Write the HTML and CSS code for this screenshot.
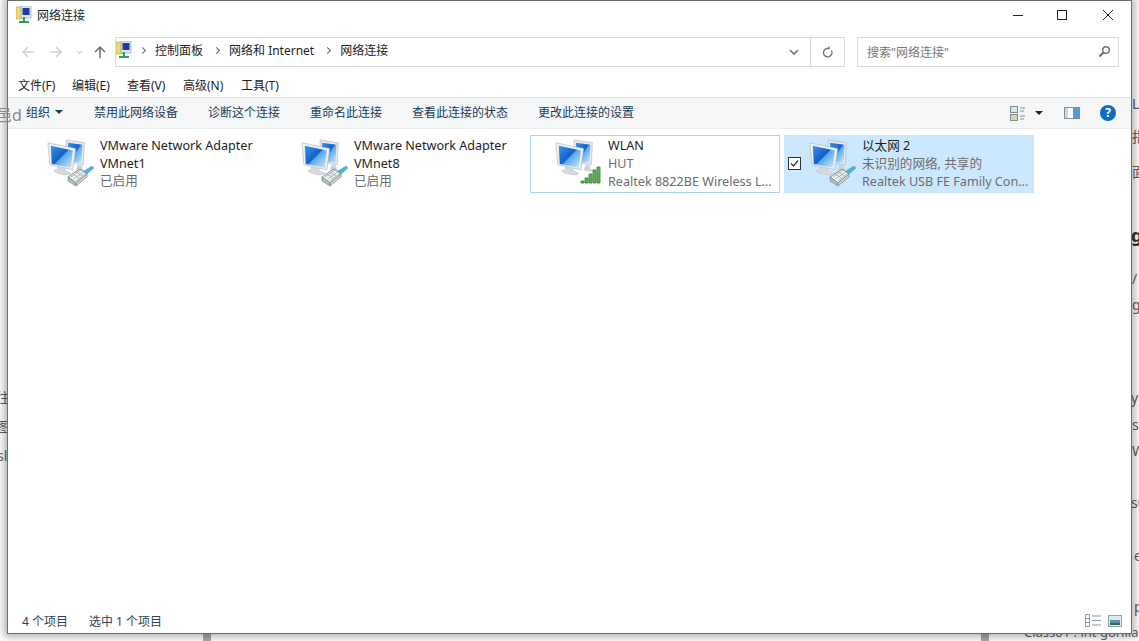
FILE: index.html
```html
<!DOCTYPE html>
<html lang="zh-CN">

<head>
    <meta charset="utf-8" />
    <title>网络连接</title>
    <link rel="stylesheet" href="styles.css">
</head>

<body>
    <svg class="defs" width="0" height="0">
        <defs>
            <linearGradient id="screen" x1="0" y1="0" x2="1" y2="1">
                <stop offset="0" stop-color="#3f95e6" />
                <stop offset="0.48" stop-color="#0f5fcb" />
                <stop offset="0.52" stop-color="#58a8ec" />
                <stop offset="1" stop-color="#d3ecfb" />
            </linearGradient>
            <symbol id="monitors" viewBox="0 0 48 48">
                <path d="M21 2l19 3-1 23-18-3z" fill="#e4e9ed" stroke="#a9b4bd" stroke-width=".6" />
                <path d="M23 5l15 2-1 19-14-2z" fill="url(#screen)" />
                <path d="M33 28l5 1v3l3 2c-2 2-8 1-10-1z" fill="#ccd2d6" />
                <path d="M2 5l29 6-3 22-24-5z" fill="#eef1f3" stroke="#a5b0b9" stroke-width=".6" />
                <path d="M5 8l23 5-2 18-20-4z" fill="url(#screen)" />
                <path d="M12 30l8 2v2l6 3c-3 3-15 1-18-3l4-1z" fill="#d5d9dc" stroke="#b9c0c5" stroke-width=".5" />
            </symbol>
            <symbol id="plug" viewBox="0 0 28 24">
                <path d="M1 14l12-8 7 5-11 9z" fill="#eef1f1" stroke="#7d8a8a" stroke-width=".9" />
                <path d="M4 14l10-7M6.500 16l10-7M9 18l9-7M5 10l7 5M8 8l7 5" stroke="#9aa7a7" stroke-width=".8" fill="none" />
                <path d="M17 8l8-5 2 2-7 6z" fill="#4fb2d4" stroke="#3a8fb0" stroke-width=".4" />
                <path d="M1 14v4l8 5v-3z" fill="#b4bebe" stroke="#7d8a8a" stroke-width=".7" />
                <path d="M9 20v3l11-9v-3z" fill="#cdd5d5" stroke="#7d8a8a" stroke-width=".7" />
            </symbol>
        </defs>
    </svg>

    <!-- bits of the window underneath -->
    <div class="under">
        <span class="bit" style="left:-4px;top:388px">往</span>
        <span class="bit" style="left:-4px;top:417px">图</span>
        <span class="bit" style="left:-3px;top:446px">sl</span>
        <span class="bit" style="left:1132px;top:94px">La</span>
        <span class="bit" style="left:1132px;top:127px">指</span>
        <span class="bit" style="left:1132px;top:162px">面</span>
        <span class="bit strong" style="left:1131px;top:225px">g</span>
        <span class="bit" style="left:1132px;top:269px">/</span>
        <span class="bit" style="left:1132px;top:295px">g</span>
        <span class="bit" style="left:1131px;top:388px">yL</span>
        <span class="bit" style="left:1132px;top:415px">ss</span>
        <span class="bit" style="left:1132px;top:441px">W</span>
        <span class="bit" style="left:1131px;top:493px">s0</span>
        <span class="bit" style="left:1134px;top:546px">e</span>
        <span class="bit" style="left:1134px;top:597px">p</span>
        <span class="bit low" style="left:1024px;top:622px">Class01 : int gorilla</span>
        <span class="bar" style="left:203px"></span>
        <span class="bar" style="left:981px"></span>
    </div>

    <main class="window">
        <header class="titlebar">
            <svg class="app-icon" width="16" height="18" viewBox="0 0 16 18">
                <rect x="0" y="1" width="7" height="12" fill="#ecd67a" stroke="#b9a552" stroke-width=".6" />
                <rect x="5" y="0" width="10" height="12" fill="#dfe6ef" stroke="#8796a8" stroke-width=".6" />
                <rect x="6.500" y="2" width="7" height="7" fill="#1c3f9e" />
                <path d="M3 15h10v2H3z" fill="#27a35a" />
                <path d="M7 11h2v4H7z" fill="#27a35a" />
            </svg>
            <span class="title">网络连接</span>
            <div class="caption">
                <svg width="12" height="12" viewBox="0 0 12 12"><path d="M1 6.500h10" stroke="#222" fill="none" /></svg>
                <svg width="12" height="12" viewBox="0 0 12 12"><rect x="1.500" y="1.500" width="9" height="9" stroke="#222" fill="none" /></svg>
                <svg width="12" height="12" viewBox="0 0 12 12"><path d="M1 1l10 10M11 1L1 11" stroke="#222" fill="none" /></svg>
            </div>
        </header>

        <div class="navrow">
            <div class="navbtns">
                <svg width="14" height="14" viewBox="0 0 14 14"><path d="M13 7H2M7 2L2 7l5 5" stroke="#d2d2d2" stroke-width="1.500" fill="none" /></svg>
                <svg width="14" height="14" viewBox="0 0 14 14"><path d="M1 7h11M7 2l5 5-5 5" stroke="#d2d2d2" stroke-width="1.500" fill="none" /></svg>
                <svg class="tiny" width="7" height="5" viewBox="0 0 7 5"><path d="M1 1l2.500 2.500L6 1" stroke="#d2d2d2" stroke-width="1.200" fill="none" /></svg>
                <svg width="14" height="14" viewBox="0 0 14 14"><path d="M7 13V2M2 7l5-5 5 5" stroke="#6d6d6d" stroke-width="1.500" fill="none" /></svg>
            </div>
            <div class="address">
                <div class="crumbs">
                    <svg class="addr-icon" width="16" height="18" viewBox="0 0 16 18">
                        <rect x="0" y="1" width="7" height="12" fill="#ecd67a" stroke="#b9a552" stroke-width=".6" />
                        <rect x="5" y="0" width="10" height="12" fill="#dfe6ef" stroke="#8796a8" stroke-width=".6" />
                        <rect x="6.500" y="2" width="7" height="7" fill="#1c3f9e" />
                        <path d="M3 15h10v2H3zM7 11h2v4H7z" fill="#27a35a" />
                    </svg>
                    <i class="crumb-sep"></i>
                    <span>控制面板</span>
                    <i class="crumb-sep"></i>
                    <span>网络和 Internet</span>
                    <i class="crumb-sep"></i>
                    <span>网络连接</span>
                </div>
                <div class="addr-end">
                    <div class="addr-btn">
                        <svg width="10" height="7" viewBox="0 0 10 7"><path d="M1 1l4 4 4-4" stroke="#777" stroke-width="1.600" fill="none" /></svg>
                    </div>
                    <div class="addr-btn">
                        <svg width="12" height="13" viewBox="0 0 12 13"><path d="M9.500 4.500a4.300 4.300 0 1 1-2.500-2H4M7 .5V3" stroke="#6d6d6d" stroke-width="1.300" fill="none" /></svg>
                    </div>
                </div>
            </div>
            <div class="search">
                <span>搜索"网络连接"</span>
                <svg width="13" height="13" viewBox="0 0 13 13"><circle cx="8" cy="5" r="3.300" stroke="#6d6d6d" stroke-width="1.400" fill="none" /><path d="M5.500 7.500L1.500 11.500" stroke="#6d6d6d" stroke-width="2" /></svg>
            </div>
        </div>

        <nav class="menubar">
            <span>文件(F)</span>
            <span>编辑(E)</span>
            <span>查看(V)</span>
            <span>高级(N)</span>
            <span>工具(T)</span>
        </nav>

        <div class="toolbar">
            <span class="tool organize">组织<i class="caret"></i></span>
            <span class="tool">禁用此网络设备</span>
            <span class="tool">诊断这个连接</span>
            <span class="tool">重命名此连接</span>
            <span class="tool">查看此连接的状态</span>
            <span class="tool">更改此连接的设置</span>
            <div class="tool-right">
                <svg width="16" height="15" viewBox="0 0 16 15">
                    <rect x=".5" y=".5" width="7" height="6" fill="#dfe6ea" stroke="#7f8c8c" />
                    <rect x=".5" y="8.500" width="7" height="6" fill="#d4d9a8" stroke="#7f8c8c" />
                    <path d="M10 2h5M10 5h4M10 10h5M10 13h4" stroke="#7f8c8c" fill="none" />
                </svg>
                <i class="caret dark"></i>
                <svg class="pane" width="16" height="12" viewBox="0 0 16 12">
                    <rect x=".5" y=".5" width="15" height="11" fill="#fff" stroke="#7f8c9c" />
                    <rect x="9" y="1" width="6" height="10" fill="#5b9bd5" />
                    <rect x="1" y="1" width="3" height="10" fill="#cfd8e0" />
                </svg>
                <span class="help">?</span>
            </div>
            <!-- glyphs of the page behind, showing through the edge of the window -->
            <span class="ghost">邑d</span>
        </div>

        <section class="tiles">
            <article class="tile">
                <div class="tile-icon">
                    <svg class="mon" width="46" height="46"><use href="#monitors" /></svg>
                    <svg class="badge" width="28" height="24"><use href="#plug" /></svg>
                </div>
                <div class="tile-text">
                    <div class="name">VMware Network Adapter VMnet1</div>
                    <div class="sub">已启用</div>
                </div>
            </article>
            <article class="tile">
                <div class="tile-icon">
                    <svg class="mon" width="46" height="46"><use href="#monitors" /></svg>
                    <svg class="badge" width="28" height="24"><use href="#plug" /></svg>
                </div>
                <div class="tile-text">
                    <div class="name">VMware Network Adapter VMnet8</div>
                    <div class="sub">已启用</div>
                </div>
            </article>
            <article class="tile hover">
                <div class="tile-icon">
                    <svg class="mon" width="46" height="46"><use href="#monitors" /></svg>
                    <svg class="badge signal" width="22" height="18" viewBox="0 0 22 18">
                        <path d="M1 17h3v-2H1zM5 17h3v-5H5zM9 17h3V8H9zM13 17h3V4h-3zM17 17h3V1h-3z" fill="#62b85a" stroke="#2f7a34" stroke-width=".8" />
                    </svg>
                </div>
                <div class="tile-text">
                    <div class="name">WLAN</div>
                    <div class="sub">HUT</div>
                    <div class="sub">Realtek 8822BE Wireless L...</div>
                </div>
            </article>
            <article class="tile selected">
                <svg class="check" width="13" height="13" viewBox="0 0 13 13">
                    <rect x=".5" y=".5" width="12" height="12" fill="#fff" stroke="#333" />
                    <path d="M3 6.500l2.500 2.500L10 3.500" stroke="#333" stroke-width="1.200" fill="none" />
                </svg>
                <div class="tile-icon">
                    <svg class="mon" width="46" height="46"><use href="#monitors" /></svg>
                    <svg class="badge" width="28" height="24"><use href="#plug" /></svg>
                </div>
                <div class="tile-text">
                    <div class="name">以太网 2</div>
                    <div class="sub">未识别的网络, 共享的</div>
                    <div class="sub">Realtek USB FE Family Con...</div>
                </div>
            </article>
        </section>

        <footer class="statusbar">
            <span class="count">4 个项目</span>
            <span>选中 1 个项目</span>
            <div class="views">
                <svg width="17" height="13" viewBox="0 0 17 13">
                    <path d="M.5.5h4v12h-4zM.5 4.500h4M.5 8.500h4M7 2h9M7 6.500h9M7 11h9" stroke="#8a97a5" fill="none" />
                </svg>
                <svg width="14" height="12" viewBox="0 0 14 12">
                    <rect x=".5" y=".5" width="13" height="11" fill="#d8eaf4" stroke="#8fa5b5" />
                    <rect x="2" y="5" width="10" height="3" fill="#5f8ea5" />
                    <rect x="2" y="8" width="10" height="2" fill="#3d6a4f" />
                </svg>
            </div>
        </footer>
    </main>
</body>

</html>
```

FILE: styles.css
```css
html,
body {
    margin: 0;
    padding: 0;
    height: 100%;
    overflow: hidden;
}

body {
    background: #fff;
    font-family: "Noto Sans", "Noto Sans CJK SC", sans-serif;
    font-size: 12px;
    color: #1e1e1e;
}

.defs {
    position: absolute;
}

.under {
    position: absolute;
    inset: 0;
    overflow: hidden;
}

.bit {
    position: absolute;
    font-size: 14px;
    line-height: 20px;
    color: #5f5f5f;
    white-space: nowrap;
}

.bit.strong {
    font-weight: 700;
    font-size: 18px;
    color: #333;
}

.bit.low {
    font-size: 13px;
}

.bar {
    position: absolute;
    top: 630px;
    width: 8px;
    height: 11px;
    background: #a9a9a9;
}

.window {
    position: relative;
    margin-left: 8px;
    margin-top: 1px;
    width: 1123px;
    height: 632px;
    background: #fff;
    display: flex;
    flex-direction: column;
    box-shadow: 0 0 0 1px #6e6e6e, 0 0 8px 4px rgba(0, 0, 0, .3);
}

.titlebar {
    height: 28px;
    display: flex;
    align-items: center;
    padding-left: 8px;
}

.app-icon {
    margin-right: 5px;
}

.title {
    font-size: 12px;
    padding-bottom: 1px;
}

.caption {
    margin-left: auto;
    display: flex;
    gap: 33px;
    padding-right: 17px;
}

.caption svg:nth-child(2) {
    margin: 0 1px 0 -1px;
}

.navrow {
    margin-top: 8px;
    height: 30px;
    display: flex;
    align-items: center;
}

.navbtns {
    width: 107px;
    flex: none;
    display: flex;
    align-items: center;
    padding-left: 13px;
    gap: 14px;
    box-sizing: border-box;
}

.navbtns .tiny {
    margin: 0 -4px 0 -1px;
}

.address {
    width: 730px;
    height: 30px;
    box-sizing: border-box;
    border: 1px solid #d9d9d9;
    display: flex;
    align-items: center;
    flex: none;
}

.crumbs {
    display: flex;
    align-items: center;
    padding-bottom: 4px;
}

.addr-icon {
    margin-right: -3px;
}

.crumb-sep {
    width: 4px;
    height: 4px;
    border-top: 1px solid #666;
    border-right: 1px solid #666;
    transform: rotate(45deg);
    margin: 1px 10.500px 0;
}

.addr-end {
    margin-left: auto;
    display: flex;
    height: 100%;
}

.addr-btn {
    width: 33px;
    display: flex;
    align-items: center;
    justify-content: center;
}

.addr-btn + .addr-btn {
    border-left: 1px solid #d9d9d9;
}

.search {
    margin-left: 12px;
    width: 262px;
    height: 30px;
    box-sizing: border-box;
    border: 1px solid #d9d9d9;
    display: flex;
    align-items: center;
    justify-content: space-between;
    padding: 0 7px 1px 9px;
    color: #777;
}

.menubar {
    margin-top: 7px;
    height: 21px;
    display: grid;
    grid-template-columns: 54px 55px 56px 58px auto;
    justify-content: start;
    align-items: center;
    padding-left: 10px;
}

.toolbar {
    position: relative;
    margin-top: 2px;
    height: 32px;
    box-sizing: border-box;
    background: #f5f6f7;
    border-top: 1px solid #dfe1e3;
    border-bottom: 1px solid #eaeced;
    display: flex;
    align-items: center;
    padding: 0 0 2px 18px;
    color: #1c3a5a;
    gap: 30px;
}

.ghost {
    position: absolute;
    left: -12px;
    top: 7px;
    font-size: 16px;
    line-height: 20px;
    color: #8a8a8a;
}

.organize {
    display: flex;
    align-items: center;
    gap: 5px;
}

.caret {
    width: 0;
    height: 0;
    margin-right: 1px;
    border-left: 4px solid transparent;
    border-right: 4px solid transparent;
    border-top: 4px solid #1c3a5a;
}

.caret.dark {
    border-top-color: #222;
}

.tool-right {
    margin-left: auto;
    display: flex;
    align-items: center;
    padding: 2px 15px 0 0;
}

.tool-right .caret {
    margin-left: 9px;
    margin-right: 1px;
}

.pane {
    margin-left: 20px;
}

.help {
    margin-left: 20px;
    width: 16px;
    height: 16px;
    border-radius: 50%;
    background: #0f6cc4;
    color: #fff;
    font-weight: 700;
    font-size: 12px;
    line-height: 16px;
    text-align: center;
}

.tiles {
    flex: 1;
    display: flex;
    gap: 4px;
    align-items: flex-start;
    padding: 6px 0 0 14px;
}

.tile {
    position: relative;
    width: 250px;
    height: 58px;
    box-sizing: border-box;
    border: 1px solid transparent;
    display: flex;
}

.tile.hover {
    border-color: #a5d7e8;
}

.tile.selected {
    background: #cce8ff;
}

.tile-icon {
    position: relative;
    width: 77px;
    flex: none;
}

.mon {
    position: absolute;
    left: 23px;
    top: 2px;
}

.badge {
    position: absolute;
    left: 44px;
    top: 27px;
}

.badge.signal {
    left: 49px;
    top: 30px;
}

.check {
    position: absolute;
    left: 3px;
    top: 21px;
}

.tile-text {
    padding-top: 1px;
    flex: 1;
    min-width: 0;
    line-height: 17.500px;
    font-size: 12.600px;
}

.sub + .sub {
    margin-top: 1px;
}

.name {
    color: #1e1e1e;
}

.sub {
    color: #6d6d6d;
}

.statusbar {
    height: 23px;
    display: flex;
    align-items: center;
    padding: 0 0 1px 14px;
    color: #333f50;
    gap: 21px;
}

.views {
    margin-left: auto;
    display: flex;
    align-items: center;
    gap: 6px;
    padding-right: 9px;
}
```
